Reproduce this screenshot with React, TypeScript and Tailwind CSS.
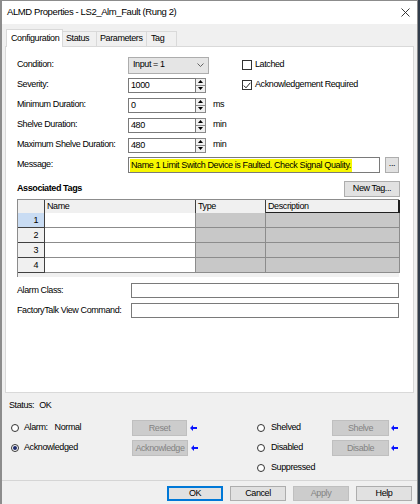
import React from 'react';

function Spin() {
  return (
    <div className="flex flex-col w-[10px] h-full border border-[#8a8a8a] border-l-0 bg-[#f0f0f0]">
      <div className="flex-1 flex items-center justify-center border-b border-[#8a8a8a]">
        <svg width="5" height="3" viewBox="0 0 5 3"><path d="M0 3 L2.5 0 L5 3Z" fill="#000" /></svg>
      </div>
      <div className="flex-1 flex items-center justify-center">
        <svg width="5" height="3" viewBox="0 0 5 3"><path d="M0 0 L2.5 3 L5 0Z" fill="#000" /></svg>
      </div>
    </div>
  );
}

function NumField({ value }: { value: string }) {
  return (
    <div className="flex h-[15px] w-[78px]">
      <div className="flex-1 border border-[#7a7a7a] bg-white pl-[2px] flex items-center leading-none">{value}</div>
      <Spin />
    </div>
  );
}

function Check({ checked, label }: { checked?: boolean; label: string }) {
  return (
    <div className="flex items-center gap-[3px]">
      <div className="w-[10px] h-[10px] border border-[#333] bg-white flex items-center justify-center">
        {checked && (
          <svg width="8" height="7" viewBox="0 0 8 7"><path d="M0.8 3.6 L3 5.8 L7.3 0.8" stroke="#222" strokeWidth="1" fill="none" /></svg>
        )}
      </div>
      <span>{label}</span>
    </div>
  );
}

function Radio({ on }: { on?: boolean }) {
  return (
    <div className="w-[8px] h-[8px] rounded-full border border-[#333] bg-white flex items-center justify-center shrink-0">
      {on && <div className="w-[4px] h-[4px] rounded-full bg-[#1d2a6b]" />}
    </div>
  );
}

function Arrow() {
  return (
    <svg width="7" height="6" viewBox="0 0 7 6" className="shrink-0">
      <path d="M0 3 L3 0 L3 2 L7 2 L7 4 L3 4 L3 6 Z" fill="#0a14ff" />
    </svg>
  );
}

function DisBtn({ label, w }: { label: string; w: string }) {
  return (
    <div className={`${w} h-[16px] bg-[#cccccc] border border-[#bfbfbf] text-[#838383] flex items-center justify-center leading-none`}>
      {label}
    </div>
  );
}

const rows = ['1', '2', '3', '4'];

export default function App() {
  return (
    <div className="w-[420px] h-[504px] bg-[#2f3b4a] flex overflow-hidden whitespace-nowrap text-[9px] tracking-[-0.4px] text-black font-['Liberation_Sans',Arial,sans-serif]">
      <div className="w-[418px] h-full flex flex-col bg-[#f0f0f0] border-l-2 border-r border-t border-[#8c8c8c]">
        {/* Title bar */}
        <div className="h-[23px] bg-white flex items-center justify-between pl-[5px] pr-[7px] shrink-0">
          <span className="text-[9.5px]">ALMD Properties - LS2_Alm_Fault (Rung 2)</span>
          <svg width="9" height="9" viewBox="0 0 9 9">
            <path d="M0.5 0.5 L8.5 8.5 M8.5 0.5 L0.5 8.5" stroke="#222" strokeWidth="0.9" />
          </svg>
        </div>

        {/* Tabs */}
        <div className="flex items-end h-[22px] pl-[4px] shrink-0">
          <div className="h-[18px] w-[57px] px-[4px] bg-white border border-b-0 border-[#d9d9d9] flex items-center relative -mb-px z-10">Configuration</div>
          <div className="h-[15px] w-[34px] px-[3px] border border-b-0 border-l-0 border-[#d9d9d9] flex items-center">Status</div>
          <div className="h-[15px] w-[50px] px-[3px] border border-b-0 border-l-0 border-[#d9d9d9] flex items-center">Parameters</div>
          <div className="h-[15px] w-[30px] px-[4px] border border-b-0 border-l-0 border-[#d9d9d9] flex items-center">Tag</div>
        </div>

        {/* Panel */}
        <div className="mx-[3px] h-[347px] bg-white border border-[#d9d9d9] shrink-0 pt-[8px] pl-[11px] pr-[12px]">
          <div className="grid grid-cols-[111px_81px_33px_auto] auto-rows-[20px] items-center">
            <span>Condition:</span>
            <div className="h-[17px] w-[81px] bg-[#e5e5e5] border border-[#adadad] flex items-center justify-between pl-[4px] pr-[4px]">
              <span>Input = 1</span>
              <svg width="7" height="4" viewBox="0 0 7 4"><path d="M0.5 0.5 L3.5 3.5 L6.5 0.5" stroke="#555" strokeWidth="0.9" fill="none" /></svg>
            </div>
            <span />
            <Check label="Latched" />

            <span>Severity:</span>
            <NumField value="1000" />
            <span />
            <Check checked label="Acknowledgement Required" />

            <span>Minimum Duration:</span>
            <NumField value="0" />
            <span className="pl-[4px]">ms</span>
            <span />

            <span>Shelve Duration:</span>
            <NumField value="480" />
            <span className="pl-[4px]">min</span>
            <span />

            <span>Maximum Shelve Duration:</span>
            <NumField value="480" />
            <span className="pl-[4px]">min</span>
            <span />
          </div>

          <div className="flex items-center h-[20px]">
            <span className="w-[111px] shrink-0">Message:</span>
            <div className="w-[252px] h-[16px] border border-[#7a7a7a] flex items-center pl-[1px] overflow-hidden">
              <span className="bg-[#f7f700] px-[1px] leading-[13px]">Name 1 Limit Switch Device is Faulted. Check Signal Quality.</span>
            </div>
            <div className="ml-[5px] w-[14px] h-[16px] bg-[#e1e1e1] border border-[#adadad] flex items-center justify-center leading-none pb-[3px]">...</div>
          </div>

          {/* Associated tags */}
          <div className="flex items-end justify-between h-[22px] pr-[1px]">
            <span className="font-bold pb-[2px]">Associated Tags</span>
            <div className="w-[56px] h-[16px] bg-[#e1e1e1] border border-[#adadad] flex items-center justify-center">New Tag...</div>
          </div>

          <div className="mt-[2px] w-[382px] h-[78px] bg-[#f0f0f0] border-t border-l border-[#8c8c8c]">
            <div className="grid grid-cols-[27px_151px_70px_134px] h-[13px]">
              <div className="bg-[#f0f0f0] border-r border-b border-[#404040]" />
              <div className="bg-[#f0f0f0] border-r border-b border-[#404040] pl-[2px] leading-[12px]">Name</div>
              <div className="bg-[#f0f0f0] border-r border-b border-[#404040] pl-[2px] leading-[12px]">Type</div>
              <div className="bg-[#f0f0f0] border-r-2 border-b-2 border-[#202020] pl-[2px] leading-[12px]">Description</div>
            </div>
            {rows.map((r) => (
              <div key={r} className="grid grid-cols-[27px_151px_70px_134px] h-[15px]">
                <div className={`${r === '1' ? 'bg-[#c9dcf3]' : 'bg-[#f0f0f0]'} border-r border-b border-[#404040] text-right pr-[6px] leading-[14px]`}>{r}</div>
                <div className="bg-white border-r border-b border-[#8c8c8c]" />
                <div className="bg-[#c8c8c8] border-r border-b border-[#8c8c8c]" />
                <div className="bg-[#c8c8c8] border-r border-b border-[#8c8c8c]" />
              </div>
            ))}
          </div>

          <div className="mt-[6px] flex flex-col gap-[5px]">
            <div className="flex items-center h-[15px]">
              <span className="w-[114px] shrink-0">Alarm Class:</span>
              <div className="w-[268px] h-[15px] border border-[#7a7a7a] bg-white" />
            </div>
            <div className="flex items-center h-[15px]">
              <span className="w-[114px] shrink-0">FactoryTalk View Command:</span>
              <div className="w-[268px] h-[15px] border border-[#7a7a7a] bg-white" />
            </div>
          </div>
        </div>

        {/* Status area */}
        <div className="pl-[7px] h-[87px] shrink-0">
          <div className="h-[25px] flex items-center gap-[5px]">
            <span>Status:</span>
            <span>OK</span>
          </div>
          <div className="grid grid-cols-[245px_auto] auto-rows-[20px] items-center">
            <div className="flex items-center">
              <div className="w-[123px] flex items-center gap-[5px] pl-[2px]">
                <Radio />
                <span>Alarm:</span>
                <span className="ml-[2px]">Normal</span>
              </div>
              <DisBtn label="Reset" w="w-[55px]" />
              <span className="ml-[3px]"><Arrow /></span>
            </div>
            <div className="flex items-center">
              <div className="w-[78px] flex items-center gap-[6px] pl-[3px]">
                <Radio />
                <span>Shelved</span>
              </div>
              <DisBtn label="Shelve" w="w-[57px]" />
              <span className="ml-[2px]"><Arrow /></span>
            </div>

            <div className="flex items-center">
              <div className="w-[123px] flex items-center gap-[5px] pl-[2px]">
                <Radio on />
                <span>Acknowledged</span>
              </div>
              <DisBtn label="Acknowledge" w="w-[56px]" />
              <span className="ml-[3px]"><Arrow /></span>
            </div>
            <div className="flex items-center">
              <div className="w-[78px] flex items-center gap-[6px] pl-[3px]">
                <Radio />
                <span>Disabled</span>
              </div>
              <DisBtn label="Disable" w="w-[57px]" />
              <span className="ml-[2px]"><Arrow /></span>
            </div>

            <div />
            <div className="flex items-center gap-[6px] pl-[3px]">
              <Radio />
              <span>Suppressed</span>
            </div>
          </div>
        </div>

        <div className="h-px bg-[#d5d5d5] shrink-0" />

        {/* Buttons */}
        <div className="flex justify-end gap-[7px] pr-[5px] pt-[5px]">
          <div className="w-[56px] h-[15px] bg-[#e1e1e1] border-2 border-[#0078d7] flex items-center justify-center">OK</div>
          <div className="w-[56px] h-[15px] bg-[#e1e1e1] border border-[#adadad] flex items-center justify-center">Cancel</div>
          <div className="w-[56px] h-[15px] bg-[#cccccc] border border-[#bfbfbf] text-[#838383] flex items-center justify-center">Apply</div>
          <div className="w-[56px] h-[15px] bg-[#e1e1e1] border border-[#adadad] flex items-center justify-center">Help</div>
        </div>
      </div>
    </div>
  );
}
